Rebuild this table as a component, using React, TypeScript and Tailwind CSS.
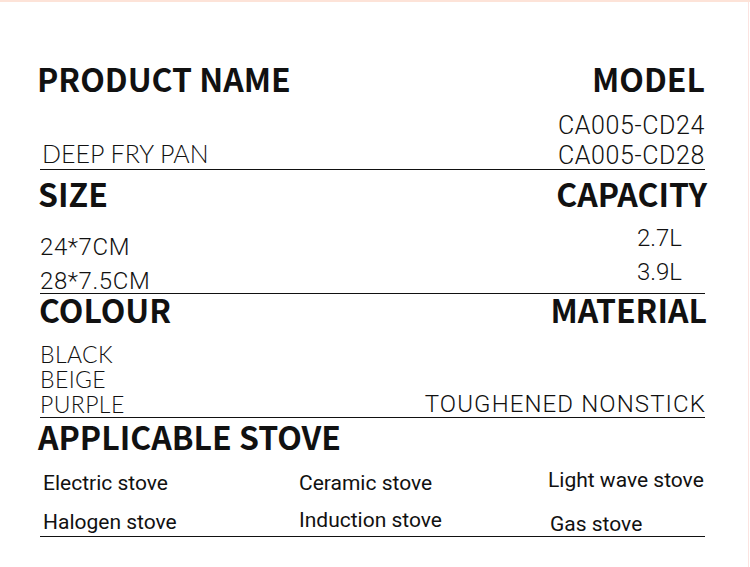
import React from 'react';

const head = "font-['Noto_Sans_CJK_SC',sans-serif] font-bold text-[32px] leading-[32px] text-[#111]";
const light = "font-['Roboto',sans-serif] font-light text-[#111]";
const lato = "font-['Lato',sans-serif] font-light text-[#111]";
const stove = "font-['Roboto',sans-serif] text-[21px] leading-[24px] text-[#111]";

const App = () => {
  return (
    <div className="w-[750px] h-[567px] bg-white relative overflow-hidden">
      <div className="h-[2px] bg-[#fde3d8]" />
      <div className="absolute right-[1px] top-[2px] bottom-0 w-[1px] bg-[#fbe3e0]" />

      <div className="ml-[40px] w-[665px]">
        {/* product name / model */}
        <div className="border-b border-[#111] pt-[60px]">
          <div className={`flex justify-between ${head}`}>
            <span className="-ml-[3px]">PRODUCT NAME</span>
            <span>MODEL</span>
          </div>
          <div className="flex justify-between items-end mt-[17px] h-[58px]">
            <span className={`${lato} text-[25px] leading-[28px] ml-[2px] mb-[2px]`}>DEEP FRY PAN</span>
            <div className={`${light} text-[25px] leading-[30px] text-right tracking-[0.6px] -mb-[2px]`}>
              <div>CA005-CD24</div>
              <div>CA005-CD28</div>
            </div>
          </div>
        </div>

        {/* size / capacity */}
        <div className="border-b border-[#111] pt-[7px]">
          <div className={`flex justify-between ${head}`}>
            <span className="-ml-[2px]">SIZE</span>
            <span className="-mr-[2px]">CAPACITY</span>
          </div>
          <div className="flex justify-between mt-[4px] h-[80px]">
            <div className={`${light} text-[24px] leading-[26px] pt-[21px] tracking-[0.6px] flex flex-col gap-[8px]`}>
              <div>24*7CM</div>
              <div>28*7.5CM</div>
            </div>
            <div className={`${light} text-[24px] leading-[26px] pt-[12px] pr-[23px] flex flex-col gap-[8px]`}>
              <div>2.7L</div>
              <div>3.9L</div>
            </div>
          </div>
        </div>

        {/* colour / material */}
        <div className="border-b border-[#111] -mt-[1px]">
          <div className={`flex justify-between ${head}`}>
            <span className="-ml-[1px]">COLOUR</span>
            <span className="-mr-[2px]">MATERIAL</span>
          </div>
          <div className="flex justify-between items-end mt-[17px]">
            <div className={`${lato} text-[23px] leading-[25px] tracking-[0.4px]`}>
              <div>BLACK</div>
              <div>BEIGE</div>
              <div>PURPLE</div>
            </div>
            <div className={`${light} text-[24px] leading-[25px] tracking-[1.1px] -mr-[1px]`}>TOUGHENED NONSTICK</div>
          </div>
        </div>

        {/* applicable stove */}
        <div className="border-b border-[#111] pt-[2px]">
          <div className={`${head} -ml-[2px]`}>APPLICABLE STOVE</div>
          <div className={`grid grid-cols-[259px_249px_1fr] mt-[19px] ${stove}`}>
            <div className="pl-[3px]">Electric stove</div>
            <div>Ceramic stove</div>
            <div className="-mt-[3px]">Light wave stove</div>
            <div className="pl-[3px] mt-[15px]">Halogen stove</div>
            <div className="mt-[13px]">Induction stove</div>
            <div className="mt-[17px] pl-[2px]">Gas stove</div>
          </div>
        </div>
      </div>
    </div>
  );
};

export default App;
